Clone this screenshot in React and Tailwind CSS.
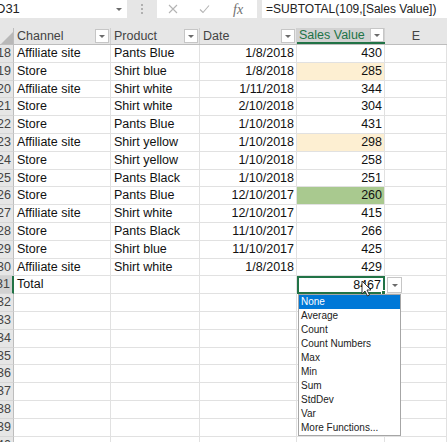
import React from "react";

const rows = [
  [18, "Affiliate site", "Pants Blue", "1/8/2018", 430, ""],
  [19, "Store", "Shirt blue", "1/8/2018", 285, "yellow"],
  [20, "Affiliate site", "Shirt white", "1/11/2018", 344, ""],
  [21, "Store", "Shirt white", "2/10/2018", 304, ""],
  [22, "Store", "Pants Blue", "1/10/2018", 431, ""],
  [23, "Affiliate site", "Shirt yellow", "1/10/2018", 298, "yellow"],
  [24, "Store", "Shirt yellow", "1/10/2018", 258, ""],
  [25, "Store", "Pants Black", "1/10/2018", 251, ""],
  [26, "Store", "Pants Blue", "12/10/2017", 260, "green"],
  [27, "Affiliate site", "Shirt white", "12/10/2017", 415, ""],
  [28, "Store", "Pants Black", "11/10/2017", 266, ""],
  [29, "Store", "Shirt blue", "11/10/2017", 425, ""],
  [30, "Affiliate site", "Shirt white", "1/8/2018", 429, ""],
];

const emptyRows = [32, 33, 34, 35, 36, 37, 38, 39, 40];

const menu = [
  "None",
  "Average",
  "Count",
  "Count Numbers",
  "Max",
  "Min",
  "Sum",
  "StdDev",
  "Var",
  "More Functions...",
];

const fills = {
  "": "",
  yellow: "bg-[#fdefd2]",
  green: "bg-[#a9c98f]",
};

function Caret() {
  return (
    <span className="w-0 h-0 border-x-[3px] border-x-transparent border-t-[3px] border-t-[#6b6b6b]" />
  );
}

function FilterButton() {
  return (
    <span className="w-[14px] h-[14px] mr-[1px] bg-white border border-[#c6c6c6] flex items-center justify-center shrink-0">
      <Caret />
    </span>
  );
}

function RowHead({ num, active }) {
  return (
    <div
      className={`w-[14px] shrink-0 overflow-hidden flex items-center justify-end pr-[2px] text-[#444] border-b border-b-[#d6d6d6] ${
        active
          ? "bg-[#d2d2d2] border-r-2 border-r-[#217346]"
          : "bg-[#e6e6e6] border-r border-r-[#bdbdbd]"
      }`}
    >
      <span className="whitespace-nowrap">{num}</span>
    </div>
  );
}

const cell = "border-r border-b border-[#e1e1e1] flex items-center whitespace-nowrap overflow-hidden";

export default function App() {
  return (
    <div
      className="relative w-[447px] h-[442px] overflow-hidden bg-[#e6e6e6] text-[12.5px] text-[#111]"
      style={{ fontFamily: '"Liberation Sans", Arial, sans-serif' }}
    >
      {/* formula bar */}
      <div className="flex h-[18px]">
        <div className="w-[127px] bg-white flex items-center justify-between pr-[5px]">
          <span className="ml-[-4px] text-[13px] text-[#222]">D31</span>
          <Caret />
        </div>
        <div className="w-[30px] flex flex-col items-center justify-center gap-[2px]">
          <span className="w-[2px] h-[2px] bg-[#b0b0b0]" />
          <span className="w-[2px] h-[2px] bg-[#b0b0b0]" />
          <span className="w-[2px] h-[2px] bg-[#b0b0b0]" />
        </div>
        <div className="w-[100px] bg-white flex items-center text-[#a8a8a8]">
          <svg width="10" height="10" viewBox="0 0 10 10" className="ml-[11px]">
            <path d="M1 1 L9 9 M9 1 L1 9" stroke="#b4b4b4" strokeWidth="1.1" fill="none" />
          </svg>
          <svg width="11" height="10" viewBox="0 0 11 10" className="ml-[21px]">
            <path d="M1 5.5 L4 8.5 L10 1.5" stroke="#b4b4b4" strokeWidth="1.1" fill="none" />
          </svg>
          <span
            className="ml-[23px] text-[14px] italic text-[#707070]"
            style={{ fontFamily: '"Liberation Serif", serif' }}
          >
            fx
          </span>
        </div>
        <div className="w-[5px]" />
        <div className="flex-1 bg-white flex items-center pl-[4px] text-[12px] text-[#222] whitespace-nowrap">
          =SUBTOTAL(109,[Sales Value])
        </div>
      </div>

      <div className="h-[10px]" />

      {/* column headings */}
      <div className="flex h-[17px] bg-[#e6e6e6] border-b border-[#bdbdbd] text-[#444]">
        <div className="w-[14px] shrink-0 border-r border-[#bdbdbd] flex items-end justify-end">
          <svg width="12" height="12" viewBox="0 0 12 12">
            <path d="M12 0 L12 12 L0 12 Z" fill="#b8b8b8" />
          </svg>
        </div>
        <div className="w-[97px] shrink-0 flex items-center justify-between pl-[3px] border-r border-[#d0d0d0]">
          <span>Channel</span>
          <FilterButton />
        </div>
        <div className="w-[89px] shrink-0 flex items-center justify-between pl-[3px] border-r border-[#d0d0d0]">
          <span>Product</span>
          <FilterButton />
        </div>
        <div className="w-[97px] shrink-0 flex items-center justify-between pl-[3px] border-r border-[#d0d0d0]">
          <span>Date</span>
          <FilterButton />
        </div>
        <div className="w-[88px] shrink-0 flex items-center justify-between pl-[2px] bg-[#d2d2d2] border-b-2 border-[#217346] text-[#217346]">
          <span>Sales Value</span>
          <FilterButton />
        </div>
        <div className="flex-1 flex items-center justify-center">E</div>
      </div>

      {/* data rows */}
      <div className="bg-white">
        {rows.map(([num, channel, product, date, value, fill]) => (
          <div key={num} className="flex h-[17.8px]">
            <RowHead num={num} />
            <div className={`${cell} w-[97px] shrink-0 pl-[3px]`}>{channel}</div>
            <div className={`${cell} w-[89px] shrink-0 pl-[3px]`}>{product}</div>
            <div className={`${cell} w-[97px] shrink-0 justify-end pr-[2px]`}>{date}</div>
            <div className={`${cell} w-[88px] shrink-0 justify-end pr-[2px] ${fills[fill]}`}>
              {value}
            </div>
            <div className={`${cell} flex-1`} />
          </div>
        ))}

        {/* total row */}
        <div className="flex h-[17.8px]">
          <RowHead num={31} active />
          <div className={`${cell} w-[97px] shrink-0 pl-[3px]`}>Total</div>
          <div className={`${cell} w-[89px] shrink-0`} />
          <div className={`${cell} w-[97px] shrink-0`} />
          <div className="relative w-[88px] shrink-0 flex items-center justify-end pr-[2px] border-2 border-[#217346]">
            8467
            <span className="absolute -right-[3px] -bottom-[3px] w-[5px] h-[5px] bg-[#217346] border border-white" />
          </div>
          <div className={`${cell} flex-1`} />
        </div>

        {emptyRows.map((num) => (
          <div key={num} className="flex h-[17.8px]">
            <RowHead num={num} />
            <div className={`${cell} w-[97px] shrink-0`} />
            <div className={`${cell} w-[89px] shrink-0`} />
            <div className={`${cell} w-[97px] shrink-0`} />
            <div className={`${cell} w-[88px] shrink-0`} />
            <div className={`${cell} flex-1`} />
          </div>
        ))}
      </div>

      {/* total dropdown button */}
      <div className="absolute left-[387px] top-[277px] w-[15px] h-[16px] bg-white border border-[#c6c6c6] flex items-center justify-center">
        <Caret />
      </div>

      {/* aggregate menu */}
      <div className="absolute left-[298px] top-[294px] w-[103px] bg-white border border-[#a6a6a6] text-[10px] text-[#222]">
        {menu.map((item, i) => (
          <div
            key={item}
            className={`h-[14px] leading-[14px] pl-[2px] whitespace-nowrap ${
              i === 0 ? "bg-[#0078d7] text-white" : ""
            }`}
          >
            {item}
          </div>
        ))}
      </div>

      {/* mouse pointer */}
      <svg
        width="11"
        height="17"
        viewBox="0 0 11 17"
        className="absolute left-[361px] top-[280px]"
      >
        <path
          d="M1 1 L1 14 L4 11 L6.5 16 L8.5 15 L6 10 L10 10 Z"
          fill="white"
          stroke="#222"
          strokeWidth="0.9"
          strokeLinejoin="round"
        />
      </svg>
    </div>
  );
}
